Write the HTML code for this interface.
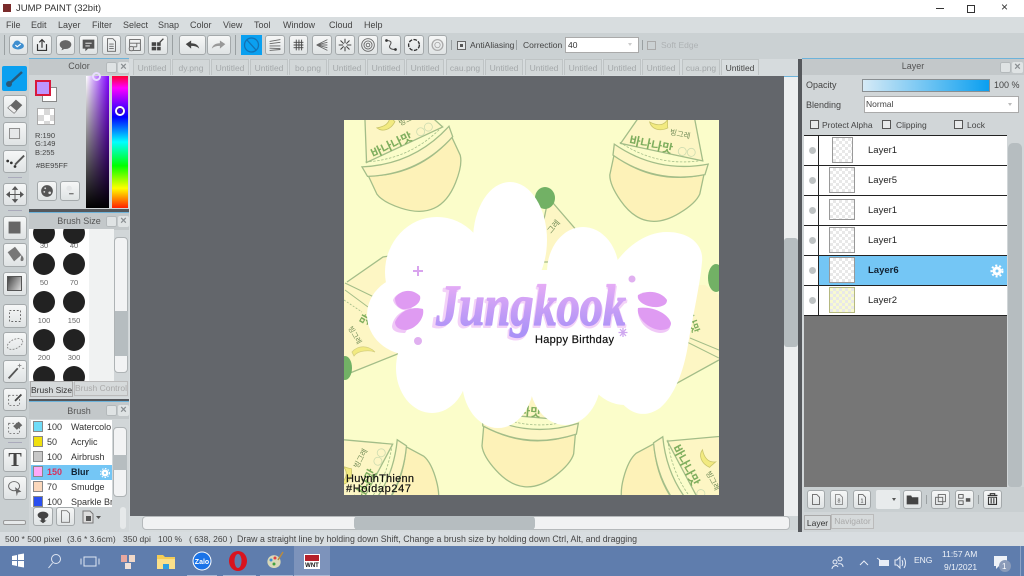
<!DOCTYPE html>
<html><head><meta charset="utf-8"><style>
html,body{margin:0;padding:0;width:1024px;height:576px;overflow:hidden;background:#d6dbdd}
body{font-family:"Liberation Sans","Noto Sans CJK KR",sans-serif;font-size:9px;color:#444;position:relative}
.a,.b,.t,.tab,.h{position:absolute}
.t{white-space:nowrap;line-height:11px}
.b{box-sizing:border-box;border:1.5px solid #a4a9ab;border-radius:3px;background:linear-gradient(#f6f7f7,#dfe3e4)}
.b svg{position:absolute;left:0;top:0;width:100%;height:100%}
.tab{top:59px;width:38px;height:16px;background:#d2d7d8;border:1px solid #bfc4c5;border-bottom:none;box-sizing:border-box;color:#a4a8aa;font-size:8.5px;text-align:center;line-height:16px}
.h{background:#c3c8ca;border-top:1px solid #6db3da;height:16px;text-align:center;font-size:9px;line-height:15px;color:#555}
.cs{position:absolute;width:11px;height:11px;background:#dfe3e4;border-radius:2px;box-sizing:border-box;font:bold 11px/10px "Liberation Sans",sans-serif;color:#8a8f92;text-align:center}
.cs.p{border:none;background:#dfe3e4;box-shadow:inset 0 0 0 1px #b4b9bb}
.ck{background-color:#fff;background-image:linear-gradient(45deg,#e8e8e8 25%,transparent 25%,transparent 75%,#e8e8e8 75%),linear-gradient(45deg,#e8e8e8 25%,transparent 25%,transparent 75%,#e8e8e8 75%);background-size:6px 6px;background-position:0 0,3px 3px}
.ck2{background-color:#fff;background-image:linear-gradient(45deg,#d8d8d8 25%,transparent 25%,transparent 75%,#d8d8d8 75%),linear-gradient(45deg,#d8d8d8 25%,transparent 25%,transparent 75%,#d8d8d8 75%);background-size:12px 12px;background-position:0 0,6px 6px}
.row{position:absolute;left:804px;width:203px;height:30px;background:#fff;border-bottom:1px solid #222;box-sizing:border-box}
.row .e{position:absolute;left:5px;top:11px;width:7px;height:7px;border-radius:50%;background:#bfc3c4}
.row .v{position:absolute;left:14px;top:0;bottom:0;width:1px;background:#222}
.row .n{position:absolute;left:64px;top:9px;font-size:9.5px;color:#222;line-height:11px}
.row .th{position:absolute;left:25px;top:1px;width:26px;height:26px;border:1px solid #999;box-sizing:border-box}
.br{position:absolute;left:31px;width:81px;height:15px;background:#fff;font-size:9px;line-height:15px;color:#333;overflow:hidden;white-space:nowrap}
.br i{position:absolute;left:2px;top:1px;width:10px;height:11px;border:1px solid #888;box-sizing:border-box}
.br span{position:absolute;left:16px}.br b{position:absolute;left:40px;font-weight:normal}
.c{position:absolute;background:#222;border-radius:50%;width:22px;height:22px}
.l{position:absolute;font-size:7.5px;color:#666;line-height:9px;text-align:center;width:20px}
.sep{position:absolute;width:1px;background:#9aa0a2}
.u{position:absolute;top:575px;height:1px;background:#a9b8d4}
</style></head><body>

<!-- title bar -->
<div class="a" style="left:0;top:0;width:1024px;height:17px;background:#fff"></div>
<div class="a" style="left:3px;top:4px;width:8px;height:8px;background:#7a2b2b"></div>
<div class="t" style="left:16px;top:3px;font-size:9.5px;color:#333">JUMP PAINT (32bit)</div>
<div class="a" style="left:936px;top:8px;width:8px;height:1px;background:#333"></div>
<div class="a" style="left:967px;top:5px;width:6px;height:6px;border:1px solid #333;background:#fff"></div>
<div class="t" style="left:1001px;top:2px;font-size:12px;color:#333">×</div>

<!-- menu -->
<div class="a" style="left:0;top:17px;width:1024px;height:16px;background:#d8dddf"></div>
<div class="t" style="left:6px;top:20px;font-size:9px;color:#444">File</div>
<div class="t" style="left:31px;top:20px;color:#444">Edit</div>
<div class="t" style="left:58px;top:20px;color:#444">Layer</div>
<div class="t" style="left:92px;top:20px;color:#444">Filter</div>
<div class="t" style="left:123px;top:20px;color:#444">Select</div>
<div class="t" style="left:158px;top:20px;color:#444">Snap</div>
<div class="t" style="left:190px;top:20px;color:#444">Color</div>
<div class="t" style="left:223px;top:20px;color:#444">View</div>
<div class="t" style="left:254px;top:20px;color:#444">Tool</div>
<div class="t" style="left:283px;top:20px;color:#444">Window</div>
<div class="t" style="left:329px;top:20px;color:#444">Cloud</div>
<div class="t" style="left:364px;top:20px;color:#444">Help</div>

<!-- toolbar -->
<div class="a" style="left:0;top:33px;width:1024px;height:26px;background:#cbd1d3"></div>
<div class="sep" style="left:4px;top:35px;height:20px"></div>
<div class="b" style="left:9px;top:35px;width:19px;height:20px"><svg viewBox="0 0 19 20"><ellipse cx="9" cy="11" rx="6.5" ry="4" fill="#3f8fd0"/><circle cx="8" cy="9" r="4" fill="#3f8fd0"/><path d="M6 10l2 2 4-3" stroke="#fff" fill="none" stroke-width="1.3"/></svg></div>
<div class="b" style="left:32px;top:35px;width:20px;height:20px"><svg viewBox="0 0 20 20"><path d="M5 9v7h10V9M10 13V4M7 7l3-3 3 3" stroke="#333" fill="none" stroke-width="1.3"/></svg></div>
<div class="b" style="left:56px;top:35px;width:19px;height:20px"><svg viewBox="0 0 19 20"><ellipse cx="9.5" cy="9.5" rx="6.5" ry="5" fill="#666"/><path d="M6 13l-1 3 4-2" fill="#666"/></svg></div>
<div class="b" style="left:79px;top:35px;width:19px;height:20px"><svg viewBox="0 0 19 20"><path d="M3 4h13v10H9l-3 3v-3H3z" fill="#555"/><path d="M6 8h7M6 11h5" stroke="#fff"/></svg></div>
<div class="b" style="left:102px;top:35px;width:19px;height:20px"><svg viewBox="0 0 19 20"><path d="M5 3h6l3 3v11H5zM7 9h5M7 11.500h5M7 14h5" stroke="#666" fill="none"/></svg></div>
<div class="b" style="left:125px;top:35px;width:20px;height:20px"><svg viewBox="0 0 20 20"><path d="M4 4h12v12H4zM4 8h12M4 12h8M12 8v4" stroke="#666" fill="none"/><circle cx="6" cy="14" r="2.500" fill="#ddd" stroke="#666"/></svg></div>
<div class="b" style="left:148px;top:35px;width:20px;height:20px"><svg viewBox="0 0 20 20"><path d="M3 7h5v4H3zM9 7h4v4H9zM3 12h5v4H3zM9 12h4v4H9z" fill="#444"/><path d="M12 7l4-4" stroke="#444" stroke-width="1.500"/></svg></div>
<div class="sep" style="left:172px;top:35px;height:20px"></div>
<div class="b" style="left:179px;top:35px;width:27px;height:20px"><svg viewBox="0 0 27 20"><path d="M6 9l6-4v3c5 0 8 2 9 6-2-2-5-3-9-3v3z" fill="#444"/></svg></div>
<div class="b" style="left:207px;top:35px;width:24px;height:20px"><svg viewBox="0 0 24 20"><path d="M19 9l-6-4v3c-5 0-8 2-9 6 2-2 5-3 9-3v3z" fill="#999"/></svg></div>
<div class="sep" style="left:235px;top:35px;height:20px"></div>
<div class="a" style="left:241px;top:35px;width:21px;height:20px;background:#0aa0f0"><svg width="21" height="20" style="position:absolute"><circle cx="10.500" cy="10" r="7" stroke="#1272b5" fill="none" stroke-width="1.300"/><path d="M6 5l9 10" stroke="#1272b5" stroke-width="1.300"/></svg></div>
<div class="b" style="left:265px;top:35px;width:20px;height:20px"><svg viewBox="0 0 20 20"><path d="M4 6l12-2M4 8.500l12-1.500M4 11h12M4 13.500l12 .5M4 16l12-1" stroke="#666" fill="none"/></svg></div>
<div class="b" style="left:289px;top:35px;width:19px;height:20px"><svg viewBox="0 0 19 20"><path d="M4 7h11M4 10h11M4 13h11M7 4v12M10 4v12M13 4v12" stroke="#444" fill="none"/></svg></div>
<div class="b" style="left:312px;top:35px;width:20px;height:20px"><svg viewBox="0 0 20 20"><path d="M4 10l12-6M4 10h12M4 10l12 6M4 10l12-3M4 10l12 3" stroke="#666" fill="none"/></svg></div>
<div class="b" style="left:335px;top:35px;width:20px;height:20px"><svg viewBox="0 0 20 20"><path d="M10 3v5M10 12v5M3 10h5M12 10h5M5 5l3.500 3.500M15 5l-3.500 3.500M5 15l3.500-3.500M15 15l-3.500-3.500" stroke="#444" fill="none" stroke-width="1.200"/></svg></div>
<div class="b" style="left:358px;top:35px;width:20px;height:20px"><svg viewBox="0 0 20 20" fill="none" stroke="#666"><circle cx="10" cy="10" r="7"/><circle cx="10" cy="10" r="4.500"/><circle cx="10" cy="10" r="2"/></svg></div>
<div class="b" style="left:381px;top:35px;width:20px;height:20px"><svg viewBox="0 0 20 20"><path d="M5 5c5 0 6 2 4 5s1 5 6 5" stroke="#555" fill="none" stroke-width="1.200"/><circle cx="5" cy="5" r="1.500" fill="#333"/><circle cx="15" cy="15" r="1.500" fill="#333"/></svg></div>
<div class="b" style="left:404px;top:35px;width:20px;height:20px"><svg viewBox="0 0 20 20"><circle cx="10" cy="10" r="6" stroke="#333" fill="none" stroke-width="1.500" stroke-dasharray="4 1.500"/></svg></div>
<div class="b" style="left:428px;top:35px;width:19px;height:20px"><svg viewBox="0 0 19 20"><circle cx="9.500" cy="10" r="6" stroke="#aaa" fill="none" stroke-width="1.500"/><circle cx="9.500" cy="10" r="3" stroke="#aaa" fill="none"/></svg></div>
<div class="sep" style="left:451px;top:40px;height:10px"></div>
<div class="a" style="left:457px;top:41px;width:9px;height:9px;border:1px solid #666;box-sizing:border-box;background:#e6e9ea"><div style="position:absolute;left:2px;top:2px;width:3px;height:3px;background:#555"></div></div>
<div class="t" style="left:470px;top:40px;font-size:8.500px;color:#444">AntiAliasing</div>
<div class="sep" style="left:516px;top:40px;height:10px"></div>
<div class="t" style="left:523px;top:40px;font-size:8.500px;color:#444">Correction</div>
<div class="a" style="left:565px;top:37px;width:74px;height:16px;background:#fff;border:1px solid #aaa;box-sizing:border-box;font-size:8.500px;line-height:14px;padding-left:2px;color:#333">40<span style="position:absolute;right:6px;top:5px;border-left:2px solid transparent;border-right:2px solid transparent;border-top:3px solid #ccc"></span></div>
<div class="sep" style="left:642px;top:40px;height:10px"></div>
<div class="a" style="left:647px;top:41px;width:9px;height:9px;border:1px solid #aaa;box-sizing:border-box"></div>
<div class="t" style="left:661px;top:40px;font-size:8.500px;color:#aeb2b4">Soft Edge</div>

<!-- tabs strip -->
<div class="a" style="left:129px;top:59px;width:672px;height:17px;background:#d6dbdd"></div>
<div class="tab" style="left:133px">Untitled</div>
<div class="tab" style="left:172px">dy.png</div>
<div class="tab" style="left:211px">Untitled</div>
<div class="tab" style="left:250px">Untitled</div>
<div class="tab" style="left:289px">bo.png</div>
<div class="tab" style="left:328px">Untitled</div>
<div class="tab" style="left:367px">Untitled</div>
<div class="tab" style="left:406px">Untitled</div>
<div class="tab" style="left:446px">cau.png</div>
<div class="tab" style="left:485px">Untitled</div>
<div class="tab" style="left:525px">Untitled</div>
<div class="tab" style="left:564px">Untitled</div>
<div class="tab" style="left:603px">Untitled</div>
<div class="tab" style="left:642px">Untitled</div>
<div class="tab" style="left:682px">cua.png</div>
<div class="tab" style="left:721px;background:#d8dddf;color:#444">Untitled</div>

<!-- canvas area -->
<div class="a" style="left:130px;top:76px;width:654px;height:440px;background:#63666b"></div>
<div class="a" style="left:784px;top:76px;width:14px;height:440px;background:#eceeef;border-top:1px solid #6db3da;box-sizing:border-box"></div>
<div class="a" style="left:784px;top:238px;width:14px;height:109px;background:#b6bdc0;border-radius:3px"></div>
<div class="a" style="left:784px;top:516px;width:14px;height:14px;background:#cfd5d7"></div>
<div class="a" style="left:130px;top:516px;width:654px;height:14px;background:#d3d8da"></div>
<div class="a" style="left:142px;top:516px;width:648px;height:14px;background:#f1f2f3;border-radius:4px;border:1px solid #b5b9bb;box-sizing:border-box"></div>
<div class="a" style="left:354px;top:516px;width:181px;height:14px;background:#b6bdc0;border-radius:4px"></div>
<div class="a" style="left:798px;top:59px;width:4px;height:473px;background:#55585c"></div>

<!-- artwork -->
<svg class="a" style="left:344px;top:120px" width="375" height="375" viewBox="344 120 375 375">
<defs>
<clipPath id="cp"><rect x="344" y="120" width="375" height="375"/></clipPath>
<linearGradient id="g" gradientUnits="userSpaceOnUse" x1="0" y1="277" x2="0" y2="332"><stop offset="0" stop-color="#eeb0f5"/><stop offset="1" stop-color="#ab92f7"/></linearGradient>
<g id="bt" stroke="#a3bd88" stroke-width="1.300">
<ellipse cx="0" cy="-82" rx="17" ry="13" fill="#72b165" stroke="none"/>
<path d="M-42-8L-15-72Q0-76 15-72L42-8Z" fill="#fdf6c4"/>
<path d="M-46 5L-46 25Q-44 35-30 48Q-15 62 0 62Q15 62 30 48Q44 35 46 25L46 5Q0 26-46 5Z" fill="#fdf2b8"/>
<path d="M-48-6Q0 14 48-6L47 5Q0 25-47 5Z" fill="#fdf6c4"/>
<path d="M-43-9Q0 8 43-9" fill="none" stroke-dasharray="2.500 1.500" stroke-width=".8"/>
<path d="M-18-35C-15-29-7-27 1-33C0-35 0-37-1-41C-4-33-11-33-18-35Z" fill="#f2ea80" stroke="#c9c46a" stroke-width=".8"/>
<circle cx="20" cy="-13" r="4" fill="none" stroke="#cddcb0" stroke-width=".8"/>
<circle cx="29" cy="-14" r="4" fill="none" stroke="#cddcb0" stroke-width=".8"/>
</g>
</defs>
<rect x="344" y="120" width="375" height="375" fill="#fbfdca"/>
<g clip-path="url(#cp)" font-family="'Liberation Sans','Noto Sans CJK KR',sans-serif">
<!-- center neck between lobes -->
<path d="M548 200L553 203L578 232L562 262L535 262Z" fill="#fdf6c4" stroke="#a3bd88" stroke-width="1.300"/>
<ellipse cx="545" cy="198" rx="10" ry="11" fill="#72b165"/>
<text x="551" y="234" font-size="8" fill="#6f8a55" transform="rotate(-50 551 234)">그레</text>
<!-- left middle bottle -->
<path d="M344 284L383 257L393 255L412 300L400 353L350 373L344 376Z" fill="#fdf6c4"/>
<path d="M347 282L383 257L395 255M350 373L400 353" fill="none" stroke="#a3bd88" stroke-width="1.300"/>
<path d="M345 283L376 298M345 290L368 307" fill="none" stroke="#a3bd88"/>
<path d="M344 300L362 312" fill="none" stroke="#a3bd88" stroke-dasharray="2 1.500" stroke-width=".8"/>
<text x="366" y="326" font-size="11" font-weight="700" fill="#7fae5e" transform="rotate(-60 366 326)">맛</text>
<text x="348" y="328" font-size="7" fill="#6f8a55" transform="rotate(60 348 328)">빙그레</text>
<path d="M352 352C358 345 368 345 375 352C370 350 358 350 354 356Z" fill="#f2ea80" stroke="#d5cf80" stroke-width=".8"/>
<ellipse cx="345" cy="368" rx="7" ry="12" fill="#72b165"/>
<!-- right middle bottle -->
<path d="M690 285L705 285L719 295L719 360L670 387L660 380Z" fill="#fdf6c4"/>
<path d="M670 387L719 360" fill="none" stroke="#a3bd88" stroke-width="1.300"/>
<path d="M687 342L719 358M690 338L719 350" fill="none" stroke="#a3bd88"/>
<text x="699" y="325" font-size="10" font-weight="700" fill="#7fae5e" transform="rotate(70 699 312)">나맛</text>
<ellipse cx="716" cy="278" rx="8" ry="14" fill="#72b165"/>
<!-- bottles -->
<g transform="translate(408 152) rotate(-25)"><use href="#bt"/><text x="-34" y="-9" font-size="12" font-weight="700" fill="#7fae5e">바나나맛</text><text x="4" y="-27" font-size="7.500" fill="#6f8a55">빙그레</text></g>
<g transform="translate(660 160) rotate(12)"><use href="#bt"/><text x="-34" y="-9" font-size="12" font-weight="700" fill="#7fae5e">바나나맛</text><text x="4" y="-27" font-size="7.500" fill="#6f8a55">빙그레</text></g>
<g transform="translate(530 425) rotate(5)"><use href="#bt"/><text x="-34" y="-9" font-size="12" font-weight="700" fill="#7fae5e">바나나맛</text></g>
<g transform="translate(380 485) rotate(-62)"><use href="#bt"/><text x="-34" y="-9" font-size="12" font-weight="700" fill="#7fae5e">바나나맛</text><text x="4" y="-27" font-size="7.500" fill="#6f8a55">빙그레</text></g>
<g transform="translate(680 482) rotate(62)"><use href="#bt"/><text x="-34" y="-9" font-size="12" font-weight="700" fill="#7fae5e">바나나맛</text><text x="4" y="-27" font-size="7.500" fill="#6f8a55">빙그레</text></g>
</g>
<g fill="#fff">
<ellipse cx="510" cy="240" rx="37" ry="58"/>
<ellipse cx="437" cy="272" rx="52" ry="55"/>
<ellipse cx="583" cy="272" rx="36" ry="45"/>
<path d="M667 232C690 232 704 245 702 262C700 285 693 315 688 345C684 370 675 395 660 408C640 422 622 410 610 385L600 290C615 255 640 232 667 232Z"/>
<ellipse cx="411" cy="315" rx="44" ry="40"/>
<ellipse cx="432" cy="368" rx="36" ry="45"/>
<ellipse cx="498" cy="380" rx="36" ry="48"/>
<ellipse cx="565" cy="378" rx="36" ry="47"/>
<ellipse cx="625" cy="350" rx="45" ry="55"/>
<rect x="420" y="270" width="220" height="110"/>
</g>
<!-- petals -->
<g fill="#f0c8f7">
<path d="M393 300C396 292 408 289 418 295L410 311C400 311 394 305 393 300Z"/>
<path d="M392 326C394 314 406 307 420 309L405 333C397 333 392 331 392 326Z"/>
<path d="M670 327C670 330 666 333 660 333C648 332 638 322 638 311Z"/>
</g>
<g fill="#df9bf2">
<path d="M395 298C400 290 412 288 420 296C422 303 412 310 402 309C397 307 395 303 395 298Z"/>
<path d="M395 322C400 311 411 306 423 309C425 318 416 329 406 330C399 330 395 327 395 322Z"/>
<path d="M667 300C662 292 648 289 638 295C636 302 648 308 658 307C664 306 667 304 667 300Z"/>
<path d="M671 323C668 313 652 306 638 308C636 317 648 329 660 330C667 330 671 328 671 323Z"/>
</g>
<g fill="#e0b0f0">
<circle cx="418" cy="341" r="4"/><circle cx="632" cy="279" r="3.500"/>
<path d="M418 266v10M413 271h10" stroke="#d9a4ee" stroke-width="2"/>
<path d="M623 328v9M618.500 332.500h9M620 329l6 7M626 329l-6 7" stroke="#cfa8f0" stroke-width="1.300"/>
</g>
<!-- title -->
<text x="433" y="327" textLength="194" lengthAdjust="spacingAndGlyphs" font-family="'Liberation Serif',serif" font-style="italic" font-weight="700" font-size="58" fill="#f3d2f8" stroke="#f3d2f8" stroke-width="2" stroke-linejoin="round">Jungkook</text>
<text x="436" y="325" textLength="190" lengthAdjust="spacingAndGlyphs" font-family="'Liberation Serif',serif" font-style="italic" font-weight="700" font-size="58" fill="url(#g)" stroke="url(#g)" stroke-width="1.200" stroke-linejoin="round">Jungkook</text>
<text x="535" y="343" font-family="'Liberation Sans',sans-serif" font-size="11" fill="#111" stroke="#111" stroke-width=".2" textLength="79">Happy Birthday</text>
<text x="346" y="482" font-family="'Liberation Sans',sans-serif" font-size="11" fill="#111" stroke="#111" stroke-width=".2" textLength="68">HuynhThienn</text>
<text x="346" y="492" font-family="'Liberation Sans',sans-serif" font-size="11" fill="#111" stroke="#111" stroke-width=".2" textLength="65">#Hoidap247</text>
</svg>

<!-- left tools column -->
<div class="a" style="left:0;top:59px;width:29px;height:473px;background:#c9cfd1"></div>
<div class="a" style="left:2px;top:66px;width:25px;height:25px;background:#0aa0f0;border-radius:2px"><svg width="25" height="25" style="position:absolute"><path d="M7 18L20 6" stroke="#2a5878" stroke-width="2.500"/><circle cx="7" cy="18" r="3" fill="#2a5878"/></svg></div>
<div class="b" style="left:3px;top:95px;width:24px;height:23px"><svg viewBox="0 0 24 23"><path d="M4 13l9-9 7 6-9 9z" fill="#666"/><path d="M4 13l7 6 3-3-7-6z" fill="#eee" stroke="#666" stroke-width=".6"/></svg></div>
<div class="b" style="left:3px;top:122px;width:24px;height:24px"><svg viewBox="0 0 24 24"><rect x="6" y="6" width="11" height="11" fill="#e6e8e9" stroke="#888"/></svg></div>
<div class="b" style="left:3px;top:150px;width:24px;height:23px"><svg viewBox="0 0 24 23"><path d="M12 15l10-10" stroke="#555" stroke-width="2"/><circle cx="4" cy="11" r="1.500" fill="#333"/><circle cx="8" cy="13" r="1.500" fill="#333"/><circle cx="12" cy="17" r="1.500" fill="#333"/></svg></div>
<div class="a" style="left:8px;top:177px;width:14px;height:1px;background:#aab"></div>
<div class="b" style="left:3px;top:183px;width:24px;height:23px"><svg viewBox="0 0 24 23"><path d="M12 4v15M5 11.500h14M12 3l-2.500 3h5zM12 20l-2.500-3h5zM3 11.500l3-2.500v5zM21 11.500l-3-2.500v5z" stroke="#555" fill="#555"/></svg></div>
<div class="a" style="left:8px;top:210px;width:14px;height:1px;background:#aab"></div>
<div class="b" style="left:3px;top:216px;width:24px;height:24px"><svg viewBox="0 0 24 24"><rect x="5" y="5" width="13" height="13" fill="#666"/></svg></div>
<div class="b" style="left:3px;top:243px;width:24px;height:24px"><svg viewBox="0 0 24 24"><path d="M4 9l8-6 7 9-8 7z" fill="#777"/><path d="M19 12c2 2 3 4 2 6-1 1-3 1-3-1" fill="#777"/></svg></div>
<div class="b" style="left:3px;top:272px;width:24px;height:24px"><div style="position:absolute;left:3px;top:3px;width:15px;height:15px;border:1px solid #555;box-sizing:border-box;background:linear-gradient(120deg,#444,#ddd)"></div></div>
<div class="b" style="left:3px;top:304px;width:24px;height:24px"><svg viewBox="0 0 24 24"><rect x="6" y="6" width="12" height="12" fill="none" stroke="#666" stroke-dasharray="2 2"/></svg></div>
<div class="b" style="left:3px;top:332px;width:24px;height:24px"><svg viewBox="0 0 24 24"><ellipse cx="12" cy="12" rx="9" ry="5" transform="rotate(-25 12 12)" fill="none" stroke="#888" stroke-dasharray="2 1.500"/></svg></div>
<div class="b" style="left:3px;top:360px;width:24px;height:23px"><svg viewBox="0 0 24 23"><path d="M5 19L15 8" stroke="#555" stroke-width="2"/><path d="M17 3v4M15 5h4M20 8h2" stroke="#888"/></svg></div>
<div class="b" style="left:3px;top:388px;width:24px;height:23px"><svg viewBox="0 0 24 23"><rect x="5" y="7" width="12" height="11" fill="none" stroke="#777" stroke-dasharray="2 2"/><path d="M12 13l7-7" stroke="#444" stroke-width="2"/></svg></div>
<div class="b" style="left:3px;top:416px;width:24px;height:23px"><svg viewBox="0 0 24 23"><rect x="5" y="7" width="12" height="11" fill="none" stroke="#777" stroke-dasharray="2 2"/><path d="M10 10l6-5 4 4-6 5z" fill="#666"/></svg></div>
<div class="a" style="left:8px;top:442px;width:14px;height:1px;background:#aab"></div>
<div class="b" style="left:3px;top:448px;width:24px;height:24px"><div style="position:absolute;left:0;right:0;top:0;text-align:center;font:bold 20px/22px 'Liberation Serif',serif;color:#444">T</div></div>
<div class="b" style="left:3px;top:476px;width:24px;height:24px"><svg viewBox="0 0 24 24"><ellipse cx="11" cy="10" rx="6" ry="5" fill="none" stroke="#666"/><path d="M12 11l7 5-4 1-1 4z" fill="#666"/></svg></div>
<div class="a" style="left:3px;top:520px;width:23px;height:5px;background:#e6e9ea;border:1px solid #999;border-radius:2px;box-sizing:border-box"></div>

<!-- color panel -->
<div class="a" style="left:29px;top:59px;width:100px;height:150px;background:#d1d6d8"></div>
<div class="h" style="left:29px;top:58px;width:100px">Color</div>
<div class="cs p" style="left:106px;top:62px"></div><div class="cs" style="left:118px;top:62px">×</div>
<div class="a" style="left:42px;top:87px;width:15px;height:15px;background:#fff;border:1px solid #888;box-sizing:border-box"></div>
<div class="a" style="left:35px;top:80px;width:16px;height:16px;background:#BE95FF;border:2px solid #d8183c;box-sizing:border-box"></div>
<div class="a ck2" style="left:37px;top:108px;width:18px;height:17px;border:1px solid #aaa;box-sizing:border-box"></div>
<div class="t" style="left:35px;top:130px;font-size:7.500px;color:#444">R:190</div>
<div class="t" style="left:35px;top:138px;font-size:7.500px;color:#444">G:149</div>
<div class="t" style="left:35px;top:147px;font-size:7.500px;color:#444">B:255</div>
<div class="t" style="left:36px;top:160px;font-size:7.500px;color:#444">#BE95FF</div>
<div class="b" style="left:37px;top:181px;width:20px;height:20px"><svg viewBox="0 0 20 20"><circle cx="10" cy="10" r="6.500" fill="#555"/><circle cx="13" cy="12" r="1.500" fill="#ddd"/><circle cx="8" cy="7" r="1" fill="#ddd"/><circle cx="7" cy="11" r="1" fill="#ddd"/></svg></div>
<div class="b" style="left:60px;top:181px;width:20px;height:20px"><svg viewBox="0 0 20 20"><circle cx="9" cy="7" r="3" fill="#e4e6e7"/><path d="M9 13h5" stroke="#777" stroke-width="1.500"/></svg></div>
<div class="a" style="left:86px;top:76px;width:23px;height:132px;background:linear-gradient(to bottom,transparent,#000),linear-gradient(to right,#fff,#8000ff)"></div>
<div class="a" style="left:112px;top:76px;width:16px;height:132px;background:linear-gradient(to bottom,#ff0030,#ff00ff 9%,#8000ff 20%,#0000ff 31%,#00ffff 50%,#00ff00 68%,#ffff00 85%,#ff2000)"></div>
<div class="a" style="left:115px;top:106px;width:10px;height:10px;border:2px solid #fff;border-radius:50%;box-sizing:border-box;outline:1px solid #4a1a90;outline-offset:-3px"></div>
<div class="a" style="left:92px;top:72px;width:9px;height:9px;border:2px solid #e8dcff;border-radius:50%;box-sizing:border-box"></div>

<!-- brush size panel -->
<div class="a" style="left:29px;top:209px;width:100px;height:3px;background:#55585c"></div>
<div class="a" style="left:29px;top:212px;width:100px;height:185px;background:#d1d6d8"></div>
<div class="h" style="left:29px;top:212px;width:100px;height:17px;line-height:17px">Brush Size</div>
<div class="cs p" style="left:106px;top:216px"></div><div class="cs" style="left:118px;top:216px">×</div>
<div class="a" style="left:29px;top:229px;width:60px;height:152px;background:#fff;overflow:hidden">
 <div class="c" style="left:4px;top:-7px"></div><div class="c" style="left:34px;top:-7px"></div>
 <div class="l" style="left:5px;top:12px">30</div><div class="l" style="left:35px;top:12px">40</div>
 <div class="c" style="left:4px;top:24px"></div><div class="c" style="left:34px;top:24px"></div>
 <div class="l" style="left:5px;top:49px">50</div><div class="l" style="left:35px;top:49px">70</div>
 <div class="c" style="left:4px;top:62px"></div><div class="c" style="left:34px;top:62px"></div>
 <div class="l" style="left:5px;top:87px">100</div><div class="l" style="left:35px;top:87px">150</div>
 <div class="c" style="left:4px;top:100px"></div><div class="c" style="left:34px;top:100px"></div>
 <div class="l" style="left:5px;top:124px">200</div><div class="l" style="left:35px;top:124px">300</div>
 <div class="c" style="left:4px;top:137px"></div><div class="c" style="left:34px;top:137px"></div>
</div>
<div class="a" style="left:89px;top:229px;width:25px;height:152px;background:#f0f2f2"></div>
<div class="a" style="left:114px;top:237px;width:14px;height:136px;background:#f2f3f4;border:1px solid #aeb3b5;border-radius:4px;box-sizing:border-box"></div>
<div class="a" style="left:115px;top:311px;width:13px;height:45px;background:#b6bdc0"></div>
<div class="a" style="left:30px;top:381px;width:43px;height:16px;background:#d6dadb;border:1px solid #aaa;box-sizing:border-box;font-size:8.500px;line-height:17px;text-align:center;color:#333;white-space:nowrap;overflow:hidden">Brush Size</div>
<div class="a" style="left:74px;top:381px;width:54px;height:15px;background:#d6dadb;border:1px solid #bbb;box-sizing:border-box;font-size:8.500px;line-height:13px;text-align:center;color:#aaa;white-space:nowrap;overflow:hidden">Brush Control</div>

<!-- brush panel -->
<div class="a" style="left:29px;top:399px;width:100px;height:2px;background:#55585c"></div>
<div class="a" style="left:29px;top:401px;width:100px;height:131px;background:#d1d6d8"></div>
<div class="h" style="left:29px;top:401px;width:100px;height:17px;line-height:18px">Brush</div>
<div class="cs p" style="left:106px;top:405px"></div><div class="cs" style="left:118px;top:405px">×</div>
<div class="br" style="top:420px"><i style="background:#6fdcf8"></i><span>100</span><b>Watercolo</b></div>
<div class="br" style="top:435px"><i style="background:#f0e010"></i><span>50</span><b>Acrylic</b></div>
<div class="br" style="top:450px"><i style="background:#c8c8c8"></i><span>100</span><b>Airbrush</b></div>
<div class="br" style="top:465px;background:#74c6f5;font-weight:bold"><i style="background:#ffa8f8"></i><span style="color:#d8305c">150</span><b style="font-weight:bold;color:#123">Blur</b><svg width="10" height="10" style="position:absolute;left:69px;top:3px"><circle cx="5" cy="5" r="3.500" fill="#fff"/><circle cx="5" cy="5" r="1" fill="#74c6f5"/><circle cx="5" cy="5" r="4.500" fill="none" stroke="#fff" stroke-dasharray="1.500 1.500"/></svg></div>
<div class="br" style="top:480px"><i style="background:#fbd8bc"></i><span>70</span><b>Smudge</b></div>
<div class="br" style="top:495px;height:12px"><i style="background:#2a4ff0"></i><span>100</span><b>Sparkle Br</b></div>
<div class="a" style="left:113px;top:427px;width:14px;height:70px;background:#f2f3f4;border:1px solid #aeb3b5;border-radius:4px;box-sizing:border-box"></div>
<div class="a" style="left:113px;top:455px;width:14px;height:15px;background:#b6bdc0"></div>
<div class="b" style="left:33px;top:507px;width:20px;height:19px"><svg viewBox="0 0 20 19"><ellipse cx="10" cy="8" rx="6" ry="4" fill="#444"/><path d="M8 10h4v4h2l-4 3-4-3h2z" fill="#444"/></svg></div>
<div class="b" style="left:56px;top:507px;width:19px;height:19px"><svg viewBox="0 0 19 19"><path d="M5 3h6l3 3v10H5z" fill="none" stroke="#777"/></svg></div>
<div class="a" style="left:80px;top:507px;width:24px;height:19px"><svg width="24" height="19" style="position:absolute"><path d="M3 4h7l3 3v9H3z" fill="#ddd" stroke="#777"/><rect x="6" y="9" width="5" height="5" fill="#555"/><path d="M16 9h5l-2.500 3z" fill="#555"/></svg></div>
<div class="a" style="left:120px;top:507px;width:6px;height:22px;background:#e6e9ea;border-radius:3px"></div>

<!-- layer panel -->
<div class="a" style="left:802px;top:59px;width:222px;height:473px;background:#d1d6d8"></div>
<div class="h" style="left:802px;top:58px;width:222px;height:16px">Layer</div>
<div class="cs p" style="left:1000px;top:62px"></div><div class="cs" style="left:1012px;top:62px">×</div>
<div class="t" style="left:806px;top:80px;color:#444">Opacity</div>
<div class="a" style="left:862px;top:79px;width:128px;height:13px;background:linear-gradient(to right,#d6eaf6,#0a9ff0);border:1px solid #8a8f92;box-sizing:border-box"></div>
<div class="t" style="left:994px;top:80px;color:#444">100 %</div>
<div class="t" style="left:806px;top:100px;color:#444">Blending</div>
<div class="a" style="left:864px;top:96px;width:155px;height:17px;background:#fff;border:1px solid #aaa;box-sizing:border-box;font-size:8.500px;line-height:15px;padding-left:1px;color:#444">Normal<span style="position:absolute;right:6px;top:6px;border-left:2px solid transparent;border-right:2px solid transparent;border-top:3px solid #bbb"></span></div>
<div class="a" style="left:810px;top:120px;width:9px;height:9px;border:1px solid #555;box-sizing:border-box;background:#e8eaeb"></div>
<div class="t" style="left:822px;top:120px;font-size:8.500px;color:#444">Protect Alpha</div>
<div class="a" style="left:882px;top:120px;width:9px;height:9px;border:1px solid #555;box-sizing:border-box;background:#e8eaeb"></div>
<div class="t" style="left:896px;top:120px;font-size:8.500px;color:#444">Clipping</div>
<div class="a" style="left:954px;top:120px;width:9px;height:9px;border:1px solid #555;box-sizing:border-box;background:#e8eaeb"></div>
<div class="t" style="left:967px;top:120px;font-size:8.500px;color:#444">Lock</div>

<div class="a" style="left:804px;top:135px;width:203px;height:1px;background:#222"></div>
<div class="row" style="top:136px"><div class="e"></div><div class="v"></div><div class="th ck" style="left:28px;width:21px"></div><div class="n">Layer1</div></div>
<div class="row" style="top:166px;height:30px"><div class="e"></div><div class="v"></div><div class="th ck"></div><div class="n">Layer5</div></div>
<div class="row" style="top:196px"><div class="e"></div><div class="v"></div><div class="th ck" style="top:3px;height:21px"></div><div class="n">Layer1</div></div>
<div class="row" style="top:226px"><div class="e"></div><div class="v"></div><div class="th ck"></div><div class="n">Layer1</div></div>
<div class="row" style="top:256px"><div class="e"></div><div class="v"></div><div style="position:absolute;left:15px;top:0;right:0;bottom:0;background:#74c6f5"></div><div class="th ck"></div><div class="n" style="font-weight:bold;color:#123">Layer6</div><svg width="14" height="14" style="position:absolute;left:186px;top:8px"><circle cx="7" cy="7" r="4.500" fill="#fff"/><circle cx="7" cy="7" r="1.500" fill="#74c6f5"/><circle cx="7" cy="7" r="5.500" fill="none" stroke="#fff" stroke-width="2" stroke-dasharray="2 2"/></svg></div>
<div class="row" style="top:286px"><div class="e"></div><div class="v"></div><div class="th ck" style="background-color:#f8fad0;border-color:#b5b880"></div><div class="n">Layer2</div></div>
<div class="a" style="left:804px;top:316px;width:203px;height:171px;background:#767676"></div>
<div class="a" style="left:1008px;top:136px;width:16px;height:351px;background:#d1d6d8"></div>
<div class="a" style="left:1008px;top:143px;width:14px;height:344px;background:#b6bdc0;border-radius:5px 5px 3px 3px"></div>
<div class="a" style="left:804px;top:487px;width:220px;height:25px;background:#c9cfd1"></div>
<div class="b" style="left:807px;top:490px;width:18px;height:19px"><svg viewBox="0 0 18 19"><path d="M5 4h5l3 3v8H5z" fill="none" stroke="#666"/></svg></div>
<div class="b" style="left:830px;top:490px;width:18px;height:19px"><svg viewBox="0 0 18 19"><path d="M5 4h5l3 3v8H5z" fill="none" stroke="#888"/><text x="9" y="13" font-size="6" text-anchor="middle" fill="#555">8</text></svg></div>
<div class="b" style="left:853px;top:490px;width:18px;height:19px"><svg viewBox="0 0 18 19"><path d="M5 4h5l3 3v8H5z" fill="none" stroke="#666"/><text x="9" y="13" font-size="6" text-anchor="middle" fill="#333">1</text></svg></div>
<div class="a" style="left:876px;top:490px;width:24px;height:19px;background:#e8ebec;border-radius:2px"><span style="position:absolute;right:4px;top:8px;border-left:2px solid transparent;border-right:2px solid transparent;border-top:3px solid #555"></span></div>
<div class="b" style="left:903px;top:490px;width:19px;height:19px"><svg viewBox="0 0 19 19"><path d="M3 5h5l1 2h7v8H3z" fill="#444"/></svg></div>
<div class="sep" style="left:926px;top:495px;height:9px"></div>
<div class="b" style="left:931px;top:490px;width:19px;height:19px"><svg viewBox="0 0 19 19"><path d="M7 4h8v8H7zM4 7h8v8H4z" fill="none" stroke="#666"/></svg></div>
<div class="b" style="left:955px;top:490px;width:19px;height:19px"><svg viewBox="0 0 19 19"><path d="M3 4h5v4H3zM3 11h5v4H3z" fill="none" stroke="#555"/><path d="M11 8h5v4h-5z" fill="#555"/></svg></div>
<div class="sep" style="left:978px;top:495px;height:9px"></div>
<div class="b" style="left:983px;top:490px;width:19px;height:19px"><svg viewBox="0 0 19 19"><path d="M4 5h11M7 5V3h5v2M5 7h9v8H5zM8 8v6M11 8v6" fill="none" stroke="#333" stroke-width="1.200"/></svg></div>
<div class="a" style="left:804px;top:515px;width:27px;height:15px;background:#d6dadb;border:1px solid #aaa;box-sizing:border-box;font-size:8.500px;line-height:14px;text-align:center;color:#333">Layer</div>
<div class="a" style="left:831px;top:514px;width:43px;height:15px;background:#d6dadb;border:1px solid #bbb;box-sizing:border-box;font-size:8.500px;line-height:13px;text-align:center;color:#aaa">Navigator</div>

<!-- status -->
<div class="a" style="left:0;top:532px;width:1024px;height:14px;background:#d8dde0"></div>
<div class="t" style="left:5px;top:534px;font-size:8.500px;color:#444">500 * 500 pixel</div>
<div class="t" style="left:67px;top:534px;font-size:8.500px;color:#444">(3.6 * 3.6cm)</div>
<div class="t" style="left:123px;top:534px;font-size:8.500px;color:#444">350 dpi</div>
<div class="t" style="left:158px;top:534px;font-size:8.500px;color:#444">100 %</div>
<div class="t" style="left:189px;top:534px;font-size:8.500px;color:#444">( 638, 260 )</div>
<div class="t" style="left:237px;top:534px;font-size:8.800px;color:#444">Draw a straight line by holding down Shift, Change a brush size by holding down Ctrl, Alt, and dragging</div>

<!-- taskbar -->
<div class="a" style="left:0;top:546px;width:1024px;height:30px;background:#5f7dad"></div>
<div class="a" style="left:294px;top:546px;width:36px;height:30px;background:#7d93bb"></div>
<svg class="a" style="left:0;top:546px" width="340" height="30" viewBox="0 0 340 30">
<path d="M12 10l5-1v5h-5zM18 8.500l6-1V14h-6zM12 15h5v5l-5-1zM18 15h6v6.500l-6-1z" fill="#fff"/>
<circle cx="56" cy="13" r="4.500" stroke="#dfe6f2" fill="none"/><path d="M52.500 17l-4 5" stroke="#dfe6f2"/>
<path d="M84 11h12v9H84zM81 12.500v6M99 12.500v6" stroke="#dfe6f2" fill="none"/>
<rect x="121" y="9" width="6" height="7" fill="#e8a8a0"/><rect x="129" y="9" width="6" height="7" fill="#f0d8c8"/><rect x="125" y="17" width="6" height="6" fill="#f0e0d8"/>
<path d="M157 9h6l2 2h10v12h-18z" fill="#f5cd55"/><rect x="157" y="13" width="18" height="10" fill="#fbe08a"/><rect x="163" y="18" width="6" height="5" fill="#2f9fe0"/>
<circle cx="202" cy="15" r="9.500" fill="#fff"/><circle cx="202" cy="15" r="8.500" fill="#1a73e8"/><text x="202" y="18" font-size="7" font-family="Liberation Sans" font-weight="700" text-anchor="middle" fill="#fff">Zalo</text>
<ellipse cx="238" cy="15" rx="9" ry="10" fill="#d8131e"/><ellipse cx="238" cy="15" rx="3.500" ry="7" fill="#5f7dad"/>
<path d="M268 13c2-5 10-5 12 0s-1 9-6 9-8-5-6-9z" fill="#d8d8b8"/><circle cx="271" cy="14" r="1.500" fill="#3a90d8"/><circle cx="275" cy="12" r="1.500" fill="#e04040"/><circle cx="274" cy="18" r="1.500" fill="#40a040"/><path d="M278 14l5-8" stroke="#b88a40" stroke-width="1.500"/>
<rect x="304" y="8" width="16" height="15" fill="#fff"/><rect x="305" y="9" width="14" height="6" fill="#b5202a"/><text x="312" y="21" font-size="6" font-family="Liberation Sans" font-weight="700" text-anchor="middle" fill="#111">WNT</text>
</svg>
<div class="u" style="left:187px;width:30px"></div><div class="u" style="left:223px;width:33px"></div><div class="u" style="left:260px;width:33px"></div><div class="u" style="left:294px;width:36px"></div>
<svg class="a" style="left:825px;top:546px" width="199" height="30" viewBox="825 546 199 30">
<circle cx="835" cy="562" r="2" stroke="#e8edf6" fill="none"/><circle cx="840" cy="559" r="2" stroke="#e8edf6" fill="none"/><path d="M832 569c0-3 5-5 6-2M838 564c2-1 5 0 5 3" stroke="#e8edf6" fill="none"/>
<path d="M860 565l4-4 4 4" stroke="#e8edf6" fill="none"/>
<rect x="879" y="560" width="10" height="6" fill="#e8edf6"/><path d="M877 558l3 2" stroke="#e8edf6"/>
<path d="M895 560h2l3-3v11l-3-3h-2z" stroke="#e8edf6" fill="none"/><path d="M902 560c1 2 1 4 0 6M904 558c2 3 2 7 0 10" stroke="#e8edf6" fill="none"/>
<path d="M994 556h13v10h-8l-3 3v-3h-2z" fill="#eef2f8"/><circle cx="1005" cy="566" r="6" fill="#8a9bb9"/>
<rect x="1020" y="546" width="1" height="30" fill="#8ea3c6"/>
</svg>
<div class="t" style="left:914px;top:555px;font-size:8.500px;color:#eef2f8">ENG</div>
<div class="t" style="left:942px;top:549px;font-size:8.500px;color:#eef2f8">11:57 AM</div>
<div class="t" style="left:944px;top:562px;font-size:8.500px;color:#eef2f8">9/1/2021</div>
<div class="t" style="left:1002px;top:561px;font-size:8px;color:#fff">1</div>
</body></html>
